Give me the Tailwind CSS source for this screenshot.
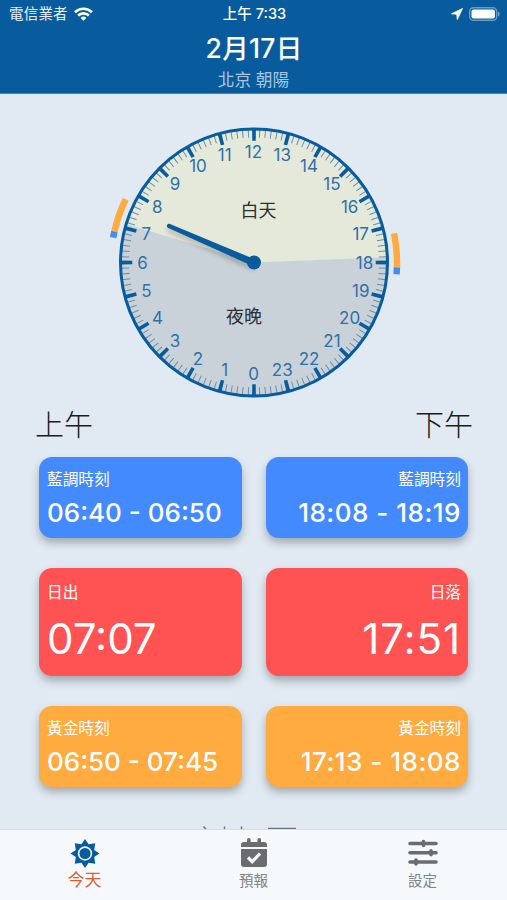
<!DOCTYPE html>
<html lang="zh-Hant">
<head>
<meta charset="utf-8">
<title>2月17日</title>
<script src="https://cdn.jsdelivr.net/npm/@tailwindcss/browser@4"></script>
</head>
<body class="relative flex h-[900px] w-[507px] flex-col overflow-hidden bg-[#e1eaf3] font-['Inter','Noto_Sans_CJK_TC',sans-serif] text-[#181d20]">
<header class="h-[94px] shrink-0 border-b border-[#4f83b3] bg-[#085c9d] text-white">
  <div class="grid h-7 grid-cols-3 items-center pl-[9px] pr-[7px] text-[14.5px] leading-7">
    <div class="flex items-center gap-1.5 text-white/90"><span class="tracking-[0.2px]">電信業者</span>
      <svg class="h-[14px] w-[19px]" viewBox="0 0 19 14" fill="none" stroke="#fff" stroke-width="2.7"><path d="M1 5.2a12.2 12.2 0 0 1 17 0M4.1 8.5a7.8 7.8 0 0 1 10.8 0"/><path d="M9.5 13.8 6.6 10.9a4.2 4.2 0 0 1 5.8 0z" fill="#fff" stroke="none"/></svg>
    </div>
    <div class="text-center font-medium">上午 7:33</div>
    <div class="flex items-center justify-end gap-1.5">
      <svg class="h-3 w-3" viewBox="0 0 12 12" fill="#fff" stroke="#fff" stroke-width=".8" stroke-linejoin="round"><path d="M11.5.5.5 5.800l5.200.500.600 5.200z"/></svg>
      <svg class="h-[14px] w-[31px]" viewBox="0 0 31 14"><rect x=".7" y=".7" width="27" height="12.6" rx="3.8" fill="none" stroke="#fff" stroke-opacity=".4" stroke-width="1.4"/><rect x="2.5" y="2.4" width="23.4" height="9.2" rx="2" fill="#fff"/><path d="M29 4.6c2.2.8 2.2 4 0 4.8z" fill="#fff" fill-opacity=".45"/></svg>
    </div>
  </div>
  <h1 class="pl-px text-center text-[26.5px] font-medium leading-10 tracking-[0.3px]">2月17日</h1>
  <p class="text-center text-[16.7px] leading-6 text-[#a8c6e1]">北京 朝陽</p>
</header>

<main class="flex flex-1 flex-col">
  <svg class="mt-[18px] h-[300px] w-full shrink-0" viewBox="0 112 507 300">
    <defs>
      <filter id="s" x="-20%" y="-50%" width="140%" height="200%" color-interpolation-filters="sRGB"><feDropShadow dx="0" dy="4" stdDeviation="2.5" flood-color="#000" flood-opacity=".22"/></filter>
    </defs>
    <g transform="translate(254 262.5)">
      <circle r="134" fill="#e5e9da"/>
      <path d="M0 0 -128.3-38.6A134 134 0 1 0 133.9-5.3Z" fill="#cad2d9"/>
      <circle r="128.7" fill="none" stroke="#6c8fa8" stroke-width="7.6" pathLength="14400" stroke-dasharray="18 82" stroke-dashoffset="9"/>
      <circle r="127.5" fill="none" stroke="#085c9d" stroke-width="11.500" pathLength="2400" stroke-dasharray="11 89" stroke-dashoffset="5.5"/>
      <circle r="133.5" fill="none" stroke="#085c9d" stroke-width="3"/>
      <g fill="none" stroke-width="6.5">
        <path id="gl" stroke="#ffab40"/><path id="bl" stroke="#448aff"/>
        <path id="gr" stroke="#ffab40"/><path id="br" stroke="#448aff"/>
      </g>
      <g id="hours" fill="#2f70a8" font-size="17" text-anchor="middle"></g>
      <g fill="#2b2f31" font-size="18" text-anchor="middle"><text x="4.500" y="-46">白天</text><text x="-10" y="60">夜晚</text></g>
      <g fill="#085c9d"><path filter="url(#s)" d="M1.200-3-84-38.600a2.200 2.200 0 0 0-1.700 4.100L-1.500 3.500z"/><circle r="7"/></g>
    </g>
  </svg>
  <div class="flex h-[45px] shrink-0 items-start justify-between pl-[35px] pr-[34px] pt-0.5 text-[29px] font-light leading-[24px]"><h2>上午</h2><h2>下午</h2></div>

  <section class="grid shrink-0 grid-cols-2 gap-x-6 gap-y-[30px] px-[39px] text-white">
    <div class="h-[81px] rounded-[13px] bg-[#448aff] px-2 pt-[12px] shadow-[0_5px_8px_rgba(0,0,0,0.28)]"><p class="text-[15.700px] leading-[22px]">藍調時刻</p><p class="mt-1 text-[26px] font-medium leading-9">06:40 - 06:50</p></div>
    <div class="h-[81px] rounded-[13px] bg-[#448aff] pl-2 pr-[7px] pt-[12px] text-right shadow-[0_5px_8px_rgba(0,0,0,0.28)]"><p class="text-[15.700px] leading-[22px]">藍調時刻</p><p class="mt-1 text-[26px] font-medium leading-9 tracking-[0.5px]">18:08 - 18:19</p></div>
    <div class="h-[108px] rounded-[13px] bg-[#ff5252] px-2 pt-[14px] shadow-[0_5px_8px_rgba(0,0,0,0.28)]"><p class="text-[15.700px] leading-[22px]">日出</p><p class="mt-[10px] text-[42px] leading-[50px]">07:07</p></div>
    <div class="h-[108px] rounded-[13px] bg-[#ff5252] pl-2 pr-[7px] pt-[14px] text-right shadow-[0_5px_8px_rgba(0,0,0,0.28)]"><p class="text-[15.700px] leading-[22px]">日落</p><p class="mt-[10px] text-[42px] leading-[50px] tracking-[0.9px]">17:51</p></div>
    <div class="h-[81px] rounded-[13px] bg-[#ffab40] px-2 pt-[12px] shadow-[0_5px_8px_rgba(0,0,0,0.28)]"><p class="text-[15.700px] leading-[22px]">黃金時刻</p><p class="mt-1 text-[26px] font-medium leading-9">06:50 - 07:45</p></div>
    <div class="h-[81px] rounded-[13px] bg-[#ffab40] pl-2 pr-[7px] pt-[12px] text-right shadow-[0_5px_8px_rgba(0,0,0,0.28)]"><p class="text-[15.700px] leading-[22px]">黃金時刻</p><p class="mt-1 text-[26px] font-medium leading-9 tracking-[0.5px]">17:13 - 18:08</p></div>
  </section>
  <svg class="mt-auto h-[4px] w-full shrink-0" viewBox="0 0 507 4" stroke="#6f777d" stroke-width="1.500"><path d="m203.500 1.500 2.500 2.500M224.500 1.500v2.500M241.500 1.500v2.500M268 3.500h28"/></svg>
</main>

<nav class="grid h-[71px] shrink-0 grid-cols-3 border-t border-[#d5dde5] bg-[#f5f9fc] text-[14.5px] text-[#808486]">
  <div class="flex flex-col items-center pt-2 text-[#d95f32]">
    <svg class="h-[30px] w-[30px]" viewBox="-15 -15.500 30 30" fill="#085c9d"><path d="M0-14.500 3.600-9.200 10.250-10.250 9.200-3.600 14.500 0 9.200 3.600 10.250 10.250 3.600 9.200 0 14.500-3.600 9.200-10.250 10.250-9.200 3.600-14.500 0-9.200-3.600-10.250-10.250-3.600-9.200Z"/><circle r="6.400" stroke="#f5f9fc" stroke-width="1.600"/></svg>
    <span class="text-[17px] leading-6">今天</span>
  </div>
  <div class="flex flex-col items-center pt-2">
    <svg class="h-[30px] w-[28px]" viewBox="0 0 28 30" fill="#6a6c6e"><path d="M1 9V7a3 3 0 0 1 3-3h3V1.800a1.800 1.800 0 0 1 3.600 0V4h6.800V1.800a1.800 1.800 0 0 1 3.600 0V4h3a3 3 0 0 1 3 3v2zM1 11h26v15a3 3 0 0 1-3 3H4a3 3 0 0 1-3-3z"/><path d="m8 19.500 4.200 4.200 7.800-8.200" fill="none" stroke="#f5f9fc" stroke-width="3.200"/></svg>
    <span class="leading-[26px]">預報</span>
  </div>
  <div class="flex flex-col items-center pt-2">
    <svg class="h-[30px] w-[30px]" viewBox="0 0 30 30" fill="none" stroke="#6a6c6e" stroke-width="3.600" stroke-linecap="round"><path d="M2 5.500h26M2 14.700h26M2 24h26M15.500 3.500v4M23 12.700v4M8 22v4"/></svg>
    <span class="leading-[26px]">設定</span>
  </div>
</nav>
<script>
const at = (hour, r) => { const a = (hour - 12) * Math.PI / 12; return [r * Math.sin(a), -r * Math.cos(a)]; };
const arc = (id, from, to) => document.getElementById(id).setAttribute('d', `M${at(from, 143)}A143 143 0 0 1 ${at(to, 143)}`);
arc('bl', 6.667, 6.833); arc('gl', 6.833, 7.75); arc('gr', 17.217, 18.133); arc('br', 18.133, 18.317);
for (let h = 0; h < 24; h++) {
  const t = document.createElementNS('http://www.w3.org/2000/svg', 'text');
  const [x, y] = at(h, 111);
  t.setAttribute('x', x - 0.5); t.setAttribute('y', y + 6); t.textContent = h;
  document.getElementById('hours').append(t);
}
</script>
</body>
</html>
